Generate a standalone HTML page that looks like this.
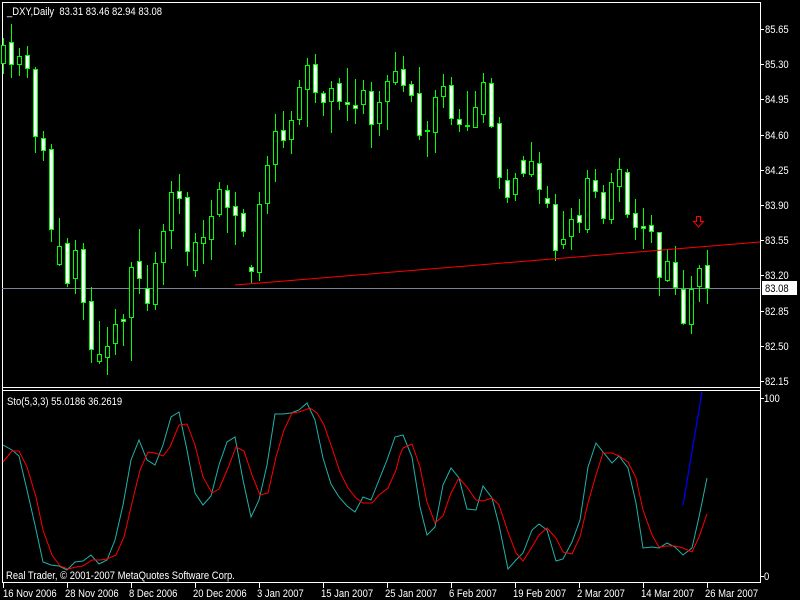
<!DOCTYPE html>
<html><head><meta charset="utf-8"><style>
html,body{margin:0;padding:0;background:#000;width:800px;height:600px;overflow:hidden}
svg{display:block}
text{font-family:"Liberation Sans",sans-serif;font-size:11px;fill:#fff}
</style></head><body>
<svg id="s" width="800" height="600" xmlns="http://www.w3.org/2000/svg" shape-rendering="crispEdges">
<rect width="800" height="600" fill="#000"/>
<g stroke="#fff" stroke-width="1" fill="none">
<line x1="2.5" y1="2" x2="2.5" y2="583"/>
<line x1="2" y1="2.5" x2="760" y2="2.5"/>
<line x1="760.5" y1="2" x2="760.5" y2="583"/>
<line x1="2" y1="387.5" x2="760" y2="387.5"/>
<line x1="2" y1="390.5" x2="760" y2="390.5"/>
<line x1="2" y1="582.5" x2="760" y2="582.5"/>
</g>
<line x1="2" y1="288.5" x2="760" y2="288.5" stroke="#7a8294"/>
<g id="candles"></g>
<polyline shape-rendering="auto" points="235,285 760,242" stroke="#ff0000" stroke-width="1" fill="none"/>
<path d="M696.5,216.5 h4 v5 h3 l-5,5.5 l-5,-5.5 h3 z" fill="none" stroke="#ff0000" shape-rendering="auto"/>
<g id="axis"></g>
<text class="t" x="7" y="15">_DXY,Daily&#160;&#160;83.31 83.46 82.94 83.08</text>
<text class="t" x="7" y="405">Sto(5,3,3) 55.0186 36.2619</text>
<text class="t" x="6" y="579">Real Trader, © 2001-2007 MetaQuotes Software Corp.</text>
<g id="stoch" shape-rendering="auto"></g>
<text class="t" x="764" y="402">100</text>
<text class="t" x="764" y="580">0</text>
</svg>
<script>
var NS="http://www.w3.org/2000/svg";
function el(p,n,a){var e=document.createElementNS(NS,n);for(var k in a)e.setAttribute(k,a[k]);p.appendChild(e);return e;}
var C=[[45,63,38,73,0],[42,64,24,77,1],[56,64,48,75,0],[55,68,46,77,1],[69,136,67,152,1],[138,150,131,160,1],[149,229,144,241,1],[246,264,218,265,0],[243,283,238,286,1],[250,278,240,293,0],[249,302,243,319,1],[301,349,287,362,1],[354,361,321,363,0],[346,357,327,374,0],[324,343,309,354,0],[319,321,314,345,1],[267,317,262,360,0],[261,278,229,293,1],[288,303,265,310,1],[263,304,252,309,0],[231,262,224,284,0],[192,230,181,248,0],[191,198,174,213,1],[197,251,192,265,1],[242,270,233,276,0],[237,243,220,263,0],[216,239,200,259,0],[189,214,182,216,0],[190,207,185,232,1],[206,215,192,244,1],[213,231,209,236,1],[267,271,265,282,1],[204,272,192,280,0],[165,203,156,213,0],[131,164,114,181,0],[130,140,111,147,1],[120,139,111,153,0],[87,119,80,124,0],[65,89,58,126,0],[64,92,54,102,1],[93,102,91,115,1],[88,101,81,132,0],[83,101,78,109,1],[102,104,68,120,1],[105,108,79,123,1],[90,104,80,113,0],[91,124,82,147,1],[102,123,91,135,0],[81,101,75,129,0],[71,82,52,84,0],[69,85,56,91,1],[84,95,81,101,1],[93,135,67,139,1],[130,131,121,156,1],[97,132,90,152,0],[86,96,74,107,0],[85,118,77,124,1],[119,124,109,131,1],[125,126,91,130,1],[107,127,91,127,0],[82,114,73,122,0],[83,126,78,127,1],[123,177,117,188,1],[180,197,169,202,1],[178,194,173,200,0],[160,173,156,176,1],[161,174,142,176,0],[163,189,152,203,1],[198,203,186,207,1],[204,250,194,260,1],[239,244,211,248,0],[219,236,208,249,0],[215,222,199,232,1],[178,229,170,232,0],[180,191,169,197,1],[192,218,185,223,1],[182,219,173,223,0],[169,186,158,201,0],[172,214,169,217,1],[213,227,199,239,1],[226,228,208,248,1],[225,231,215,242,1],[232,277,232,295,1],[261,280,249,281,0],[262,287,246,294,1],[289,323,270,324,1],[289,324,276,333,0],[268,286,265,301,0],[265,288,250,303,1]];
var g=document.getElementById("candles");
C.forEach(function(c,i){var x=3+8*i;
 el(g,"line",{x1:x+0.5,y1:c[2],x2:x+0.5,y2:c[3]+1,stroke:"#00ff00"});
 var h=Math.max(c[1]-c[0],1);
 el(g,"rect",{x:x-1.5,y:c[0]+0.5,width:4,height:h,fill:c[4]?"#fff":"#000",stroke:"#00ff00"});
});
var ax=document.getElementById("axis");
var P=["85.65","85.30","84.95","84.60","84.25","83.90","83.55","83.20","82.85","82.50","82.15"];
P.forEach(function(p,i){var y=Math.round(29+i*35.2);
 el(ax,"line",{x1:760,y1:y+0.5,x2:764,y2:y+0.5,stroke:"#fff"});
 var t=el(ax,"text",{x:765,y:y+4,"class":"t"});t.textContent=p;});
el(ax,"rect",{x:762,y:281,width:35,height:14,fill:"#fff"});
var t=el(ax,"text",{x:765,y:292,style:"fill:#000","class":"t"});t.textContent="83.08";
el(ax,"line",{x1:760,y1:398.5,x2:764,y2:398.5,stroke:"#fff"});
el(ax,"line",{x1:760,y1:576.5,x2:764,y2:576.5,stroke:"#fff"});
var D=["16 Nov 2006","28 Nov 2006","8 Dec 2006","20 Dec 2006","3 Jan 2007","15 Jan 2007","25 Jan 2007","6 Feb 2007","19 Feb 2007","2 Mar 2007","14 Mar 2007","26 Mar 2007"];
D.forEach(function(d,i){var x=3+64*i;
 el(ax,"line",{x1:x+0.5,y1:583,x2:x+0.5,y2:588,stroke:"#fff"});
 var t=el(ax,"text",{x:i==0?3:x-2,y:597,"class":"t"});t.textContent=d;});
var cy="3,445 12,450 19,456 27,490 35,525 43,562 51,565 59,566 67,570 75,562 83,561 91,555 99,564 107,560 115,540 123,505 131,460 139,440 147,460 155,465 163,445 171,417 179,412 187,450 195,493 203,505 211,496 219,465 227,442 235,437 243,480 251,517 259,500 267,465 275,414 283,414 291,413 299,410 307,403 315,420 323,458 331,484 339,497 347,506 355,512 363,497 371,500 379,480 387,460 395,437 403,435 412,457 420,507 427,535 435,527 443,485 451,468 459,478 467,509 476,510 483,486 492,498 499,525 508,569 516,560 523,553 532,530 539,524 547,530 556,561 563,559 572,542 580,520 588,467 596,443 603,452 612,463 619,456 628,468 636,503 643,548 652,547 659,548 667,543 675,547 683,555 692,548 699,517 707,478";
var rd="3,462 12,451 19,451 27,467 36,497 43,530 52,555 60,566 68,569 76,567 83,566 92,560 100,560 107,559 116,555 124,537 132,503 140,470 148,452 155,453 163,456 170,447 179,425 187,424 195,445 203,477 212,493 219,489 228,468 236,447 244,451 252,475 260,495 268,493 276,457 284,430 292,413 299,412 310,408 317,413 324,425 332,448 340,472 348,488 356,498 363,503 372,503 379,495 388,488 396,470 400,455 403,448 412,444 420,467 427,502 435,523 443,516 451,493 459,478 467,487 476,500 483,501 492,498 499,505 508,532 516,553 523,561 532,547 539,535 547,528 556,538 563,552 572,554 580,537 588,503 596,475 603,453 612,453 619,456 628,462 636,478 643,510 652,535 659,547 667,546 675,546 683,548 692,552 699,537 707,514";
var sg=document.getElementById("stoch");
el(sg,"polyline",{points:cy,fill:"none",stroke:"#20b2aa","stroke-width":1});
el(sg,"polyline",{points:rd,fill:"none",stroke:"#ff0000","stroke-width":1});
el(sg,"polyline",{points:"683,505 702,392",fill:"none",stroke:"#0000ff","stroke-width":1.2});
var ts=document.querySelectorAll("text.t");
for(var i=0;i<ts.length;i++){try{var L=ts[i].getComputedTextLength();if(L>0){ts[i].setAttribute("textLength",(L*0.86).toFixed(1));ts[i].setAttribute("lengthAdjust","spacingAndGlyphs");}}catch(e){}}
</script>
</body></html>
